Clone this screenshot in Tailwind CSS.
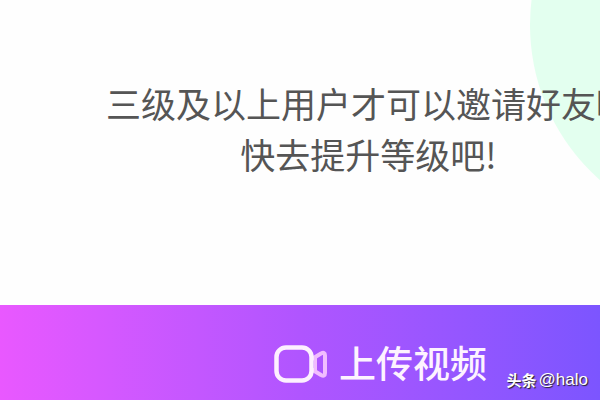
<!DOCTYPE html>
<html lang="zh-CN">
<head>
<meta charset="utf-8">
<meta name="viewport" content="width=device-width, initial-scale=1">
<title>邀请好友</title>
<script src="https://cdn.jsdelivr.net/npm/@tailwindcss/browser@4"></script>
</head>
<body class="relative flex min-h-screen flex-col overflow-hidden bg-[#fefefe] font-['Noto_Sans_CJK_SC',sans-serif]">
  <div class="absolute -top-[182px] left-[530px] size-[414px] rounded-full bg-[#e3ffef]" aria-hidden="true"></div>
  <main class="relative flex-1 pt-[77px] pl-[106px]">
    <p class="w-max text-center text-[35px] leading-[51px] font-normal whitespace-nowrap text-[#555555]">三级及以上用户才可以邀请好友哦<br>快去提升等级吧!</p>
  </main>
  <footer class="relative">
    <button type="button" class="flex h-[95px] w-full items-center gap-[11px] bg-linear-to-r from-[#e958ff] via-[#b055ff] to-[#7c55ff] pt-[22px] pl-[274px] text-[37px] leading-[50px] font-medium text-[#fdf3ff]">
      <svg class="h-[38px] w-[54px] shrink-0" viewBox="0 0 54 38" fill="none" aria-hidden="true">
        <path d="M38 14 L47 8.500 Q51 6.500 51 10.500 V28 Q51 32 47 30 L38 24.500" stroke="#f1bdff" stroke-width="4" stroke-linejoin="round"/>
        <path d="M41.500 13 V25.500" stroke="#f1bdff" stroke-width="3"/>
        <rect x="2.500" y="2.500" width="35" height="33" rx="9.500" stroke="#fdf0ff" stroke-width="4.500"/>
      </svg>
      <span class="-mt-1 whitespace-nowrap">上传视频</span>
    </button>
    <div class="absolute right-3 bottom-2 flex items-center gap-0.5 text-[15px] leading-6 text-white [text-shadow:1px_1px_1px_#222]">
      <span class="font-bold">头条</span>
      <span class="font-['Liberation_Sans',sans-serif] text-[17px] leading-6">@halo</span>
    </div>
  </footer>
</body>
</html>
